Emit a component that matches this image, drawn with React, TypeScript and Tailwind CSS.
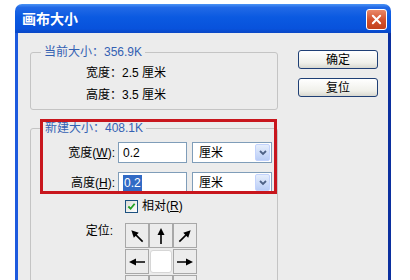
import React from 'react';

function Arrow({ rot }: { rot: string }) {
  return (
    <svg viewBox="0 0 18 18" className={`h-[18px] w-[18px] ${rot}`}>
      <line x1="9" y1="17" x2="9" y2="6" stroke="#000" strokeWidth="1.6" />
      <polygon points="9,1 5.5,8 12.5,8" fill="#000" />
    </svg>
  );
}

function Cell({ rot, center }: { rot?: string; center?: boolean }) {
  if (center) {
    return (
      <div className="flex h-[25px] w-[24px] items-center justify-center">
        <div className="h-[23px] w-[22px] rounded-[3px] border border-[#d6d6d6] bg-white" />
      </div>
    );
  }
  return (
    <div className="flex h-[25px] w-[24px] items-center justify-center border border-[#a8a8a8] bg-[#ececec]">
      {rot && <Arrow rot={rot} />}
    </div>
  );
}

function UnitSelect() {
  return (
    <div className="ml-[5px] flex h-[21px] w-[80px] items-center justify-between border border-[#7f9db9] bg-white pl-[6px] pr-[1px]">
      <span>厘米</span>
      <div className="flex h-[17px] w-[15px] items-center justify-center rounded-[2px] border border-[#c3d3fd] bg-[linear-gradient(to_bottom,#e6eefc,#b9cdf6)]">
        <svg viewBox="0 0 8 6" className="h-[6px] w-[8px]">
          <polyline points="1,1 4,4 7,1" fill="none" stroke="#4d6185" strokeWidth="1.8" />
        </svg>
      </div>
    </div>
  );
}

export default function App() {
  return (
    <div
      className="relative h-[280px] w-[410px] overflow-hidden bg-white pl-[15px] pt-[4px] text-[12px] leading-[16px] text-black"
      style={{ fontFamily: '"Liberation Sans", "Noto Sans CJK SC", sans-serif' }}
    >
      <div className="w-[376px]">
        {/* title bar */}
        <div className="flex h-[29px] items-center justify-between rounded-t-[7px] bg-[linear-gradient(to_bottom,#4a93f5_0%,#2269e6_12%,#0b5ae1_45%,#0852dc_85%,#0a47c6_100%)] pl-[7px] pr-[4px]">
          <span className="text-[14px] font-bold text-white">画布大小</span>
          <div className="mt-[2px] flex h-[21px] w-[21px] items-center justify-center rounded-[3px] border border-white bg-[linear-gradient(to_bottom,#ea8a6a,#d4532f_50%,#c2401c)]">
            <svg viewBox="0 0 12 12" className="h-[11px] w-[11px]">
              <path d="M2 2 L10 10 M10 2 L2 10" stroke="#fff" strokeWidth="2.2" strokeLinecap="round" />
            </svg>
          </div>
        </div>

        {/* body */}
        <div className="flex h-[260px] border-l-[3px] border-r-[3px] border-l-[#1d5ade] border-r-[#0b2f9e] bg-[#ececec]">
          <div className="ml-[12px] w-[248px] pt-[11px]">
            <fieldset className="rounded-[3px] border border-[#c4c4c4] px-[10px] pb-[6px]">
              <legend className="px-[3px] text-[#3461b3]">当前大小：356.9K</legend>
              <div className="ml-[45px] mt-[5px]">宽度：2.5 厘米</div>
              <div className="ml-[45px] mt-[6px]">高度：3.5 厘米</div>
            </fieldset>

            <fieldset className="mt-[10px] h-[200px] rounded-[3px] border border-[#c4c4c4] pl-[11px]">
              <legend className="px-[3px] text-[#3461b3]">新建大小：408.1K</legend>
              <div className="mt-[6px] flex h-[21px] items-center">
                <span className="w-[73px] text-right">
                  宽度(<span className="underline">W</span>):
                </span>
                <div className="ml-[3px] flex h-[21px] w-[69px] items-center border border-[#7f9db9] bg-white pl-[4px]">
                  0.2
                </div>
                <UnitSelect />
              </div>
              <div className="mt-[9px] flex h-[21px] items-center">
                <span className="w-[73px] text-right">
                  高度(<span className="underline">H</span>):
                </span>
                <div className="ml-[3px] flex h-[21px] w-[69px] items-center border border-[#7f9db9] bg-white pl-[4px]">
                  <span className="bg-[#316ac5] px-[1px] text-white">0.2</span>
                </div>
                <UnitSelect />
              </div>
              <div className="ml-[83px] mt-[5px] flex h-[16px] items-center">
                <div className="flex h-[13px] w-[13px] items-center justify-center border border-[#1c5180] bg-[linear-gradient(to_bottom_right,#dcdcd6,#ffffff)]">
                  <svg viewBox="0 0 10 10" className="h-[9px] w-[9px]">
                    <polyline points="1.5,5 4,7.5 8.5,2" fill="none" stroke="#21a121" strokeWidth="2" />
                  </svg>
                </div>
                <span className="ml-[4px]">
                  相对(<span className="underline">R</span>)
                </span>
              </div>
              <div className="mt-[9px] flex items-start">
                <span className="w-[71px] text-right">定位:</span>
                <div className="ml-[12px] grid grid-cols-[24px_24px_24px] gap-y-[1px]">
                  <Cell rot="-rotate-45" />
                  <Cell rot="rotate-0" />
                  <Cell rot="rotate-45" />
                  <Cell rot="-rotate-90" />
                  <Cell center />
                  <Cell rot="rotate-90" />
                  <Cell rot="-rotate-[135deg]" />
                  <Cell rot="rotate-180" />
                  <Cell rot="rotate-[135deg]" />
                </div>
              </div>
            </fieldset>
          </div>

          <div className="ml-[20px] flex w-[80px] flex-col pt-[17px]">
            <button className="h-[19px] w-[80px] rounded-[3px] border border-[#1f3f75] bg-[linear-gradient(to_bottom,#ffffff,#f0f0ea_70%,#d8d8d0)] leading-[16px]">
              确定
            </button>
            <button className="mt-[9px] h-[19px] w-[80px] rounded-[3px] border border-[#1f3f75] bg-[linear-gradient(to_bottom,#ffffff,#f0f0ea_70%,#d8d8d0)] leading-[16px]">
              复位
            </button>
          </div>
        </div>
      </div>

      {/* red annotation box */}
      <div className="absolute left-[40px] top-[119px] h-[75px] w-[237px] border-[3px] border-[#c8161d]" />
    </div>
  );
}
